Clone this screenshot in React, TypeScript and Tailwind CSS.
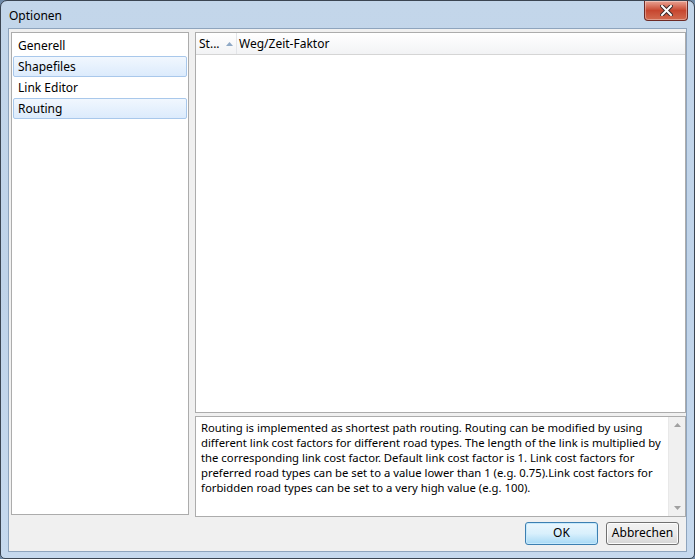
import React from "react";

const items = ["Generell", "Shapefiles", "Link Editor", "Routing"];

const lines = [
  "Routing is implemented as shortest path routing. Routing can be modified by using",
  "different link cost factors for different road types. The length of the link is multiplied by",
  "the corresponding link cost factor. Default link cost factor is 1. Link cost factors for",
  "preferred road types can be set to a value lower than 1 (e.g. 0.75).Link cost factors for",
  "forbidden road types can be set to a very high value (e.g. 100).",
];

const App: React.FC = () => {
  const selected = [1, 3];

  return (
    <div
      className="w-[695px] h-[559px] bg-[#6f8aa8] text-[12px] text-black"
      style={{ fontFamily: '"Noto Sans", "Open Sans", sans-serif' }}
    >
      <div className="w-full h-full rounded-t-[7px] rounded-b-[5px] border border-[#3b4552] bg-gradient-to-b from-[#c3d6ea] via-[#bfd3e9] to-[#c6d9ee] flex flex-col">
        {/* title bar */}
        <div className="h-[27px] flex items-start justify-between shrink-0">
          <span className="pl-[8px] pt-[7px] leading-[16px]">Optionen</span>
          <div className="mr-[6px] w-[44px] h-[20px] rounded-b-[4px] border border-t-0 border-[#6d2a25] bg-gradient-to-b from-[#e8a293] via-[#c7462f] to-[#d26a4f] flex items-center justify-center shadow-[inset_0_0_0_1px_rgba(255,255,255,0.35)]">
            <svg width="13" height="11" viewBox="0 0 13 11">
              <path
                d="M2 1 L11 10 M11 1 L2 10"
                stroke="#3a2a2a"
                strokeWidth="4"
                strokeLinecap="square"
              />
              <path
                d="M2 1 L11 10 M11 1 L2 10"
                stroke="#ffffff"
                strokeWidth="2"
                strokeLinecap="square"
              />
            </svg>
          </div>
        </div>

        {/* client */}
        <div className="flex-1 mx-[7px] mb-[7px] border border-[#8ea4bd] bg-[#f0f0f0] flex flex-col">
          <div className="flex flex-1 min-h-0 pt-[3px] pl-[2px] gap-[6px]">
            {/* left list */}
            <div className="w-[178px] shrink-0 h-[483px] border border-[#acacac] bg-white pt-[2px] px-[1px] flex flex-col">
              {items.map((item, i) => {
                const isSel = selected.includes(i);
                return (
                  <div
                    key={item}
                    className={`h-[21px] leading-[19px] pl-[4px] rounded-[2px] border ${
                      isSel
                        ? "border-[#a9c8eb] bg-gradient-to-b from-[#f1f7fe] to-[#dcebfc]"
                        : "border-transparent"
                    }`}
                  >
                    {item}
                  </div>
                );
              })}
            </div>

            {/* right side */}
            <div className="flex-1 min-w-0 flex flex-col">
              <div className="h-[381px] border border-[#acacac] bg-white flex flex-col">
                <div className="h-[22px] flex bg-gradient-to-b from-white to-[#f2f3f5] border-b border-[#d5d5d5]">
                  <div className="w-[41px] border-r border-[#e3e5e8] flex items-center pl-[3px] gap-[6px]">
                    <span>St...</span>
                    <svg width="7" height="4" viewBox="0 0 7 4">
                      <path d="M0 4 L3.5 0 L7 4 Z" fill="#8fa9c6" />
                    </svg>
                  </div>
                  <div className="flex items-center pl-[2px]">Weg/Zeit-Faktor</div>
                </div>
              </div>
              <div className="mt-[3px] h-[101px] border border-[#acacac] bg-white flex">
                <div className="flex-1 min-w-0 pl-[5px] pt-[3px] text-[11.3px] leading-[15px] whitespace-nowrap overflow-hidden">
                  {lines.map((l) => (
                    <div key={l}>{l}</div>
                  ))}
                </div>
                <div className="w-[17px] shrink-0 bg-[#f0f0f0] border-l border-[#e8e8e8] flex flex-col justify-between items-center py-[6px]">
                  <svg width="7" height="4" viewBox="0 0 7 4">
                    <path d="M0 4 L3.5 0 L7 4 Z" fill="#a0a0a0" />
                  </svg>
                  <svg width="7" height="4" viewBox="0 0 7 4">
                    <path d="M0 0 L3.5 4 L7 0 Z" fill="#a0a0a0" />
                  </svg>
                </div>
              </div>
            </div>
          </div>

          {/* buttons */}
          <div className="h-[34px] flex items-center justify-end gap-[8px] pr-[7px] pb-[2px]">
            <button className="w-[73px] h-[23px] rounded-[3px] border border-[#3c7fb1] bg-gradient-to-b from-[#eaf6fd] via-[#d9f0fc] to-[#a7d9f5] shadow-[inset_0_0_0_1px_#c6e9fc]">
              OK
            </button>
            <button className="w-[73px] h-[23px] rounded-[3px] border border-[#707070] bg-gradient-to-b from-[#f2f2f2] via-[#ebebeb] to-[#d5d5d5] shadow-[inset_0_0_0_1px_#fcfcfc]">
              Abbrechen
            </button>
          </div>
        </div>
      </div>
    </div>
  );
};

export default App;
